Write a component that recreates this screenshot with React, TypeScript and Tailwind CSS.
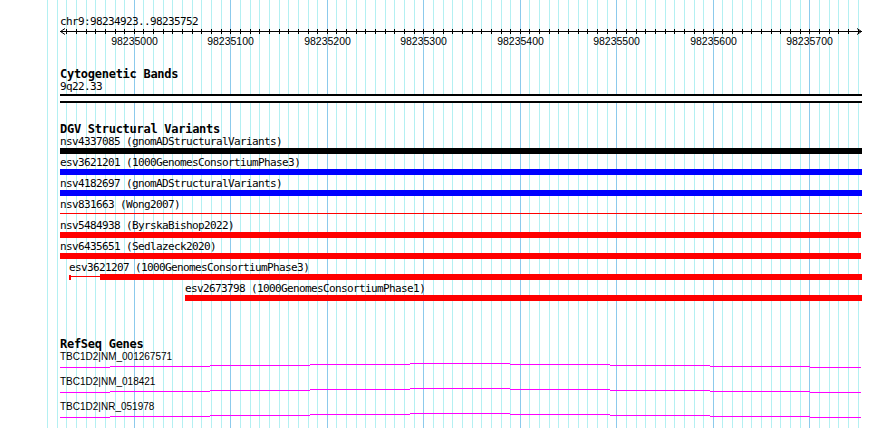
import React from "react";

const START = 98234923;
const END = 98235752;
const X0 = 60;
const SPAN = 800;

// genome coordinate -> pixel column on the page
const bpToX = (bp: number) => Math.floor(X0 + ((bp - START) * SPAN) / (END - START));

interface Variant {
  id: string;
  source: string;
  color: string;
  start: number;
  end: number;
  thin?: boolean;
  lead?: number; // x where a thin leading connector starts
}

const variants: Variant[] = [
  { id: "nsv4337085", source: "gnomADStructuralVariants", color: "#000000", start: 60, end: 862 },
  { id: "esv3621201", source: "1000GenomesConsortiumPhase3", color: "#0000ff", start: 60, end: 862 },
  { id: "nsv4182697", source: "gnomADStructuralVariants", color: "#0000ff", start: 60, end: 862 },
  { id: "nsv831663", source: "Wong2007", color: "#ff0000", start: 60, end: 862, thin: true },
  { id: "nsv5484938", source: "ByrskaBishop2022", color: "#ff0000", start: 60, end: 861 },
  { id: "nsv6435651", source: "Sedlazeck2020", color: "#ff0000", start: 60, end: 861 },
  { id: "esv3621207", source: "1000GenomesConsortiumPhase3", color: "#ff0000", start: 100, end: 862, lead: 69 },
  { id: "esv2673798", source: "1000GenomesConsortiumPhase1", color: "#ff0000", start: 185, end: 862 },
];

const genes = ["TBC1D2|NM_001267571", "TBC1D2|NM_018421", "TBC1D2|NR_051978"];

// stepped transcript line: [from, to, drop in px]
const geneSteps: [number, number, number][] = [
  [60, 110, 4],
  [110, 210, 3],
  [210, 310, 2],
  [310, 410, 1],
  [410, 510, 0],
  [510, 610, 1],
  [610, 710, 2],
  [710, 810, 3],
  [810, 861, 4],
];

const gridBps: number[] = [];
for (let bp = 98234910; bp <= 98235750; bp += 10) gridBps.push(bp);
const rulerBps = gridBps.filter((bp) => bp >= 98234930);
const majorBps = gridBps.filter((bp) => bp % 100 === 0);

function Grid() {
  return (
    <svg className="absolute inset-0" width={890} height={428} shapeRendering="crispEdges">
      {gridBps.map((bp) => (
        <rect
          key={bp}
          x={bpToX(bp)}
          y={0}
          width={1}
          height={428}
          fill={bp % 100 === 0 ? "#8ccaec" : "#b4f0f2"}
        />
      ))}
    </svg>
  );
}

function Ruler() {
  return (
    <div className="flex flex-col">
      <div className="h-[12px] text-[11px] leading-[12px] tracking-[-0.62px] font-['DejaVu_Sans_Mono',monospace]">
        chr9:98234923..98235752
      </div>
      <svg className="block" width={802} height={7} shapeRendering="crispEdges">
        <rect x={0} y={3} width={802} height={1} fill="#000" />
        {rulerBps.map((bp) => (
          <rect key={bp} x={bpToX(bp) - X0} y={1} width={1} height={5} fill="#000" />
        ))}
        <path d="M5 0.5 L0.5 3.5 L5 6.5" stroke="#000" fill="none" shapeRendering="auto" />
        <path d="M797 0.5 L801.5 3.5 L797 6.5" stroke="#000" fill="none" shapeRendering="auto" />
      </svg>
      <div className="relative h-[13px] text-[10.5px] leading-[13px] font-['Liberation_Sans',Arial,sans-serif]">
        {majorBps.map((bp) => (
          <span
            key={bp}
            className="absolute top-0 -translate-x-1/2 whitespace-nowrap"
            style={{ left: bpToX(bp) - X0 + 0.5 }}
          >
            {bp}
          </span>
        ))}
      </div>
    </div>
  );
}

function TrackTitle({ children }: { children: React.ReactNode }) {
  return (
    <div className="h-[13px] text-[12px] font-bold leading-[13px] tracking-[-0.27px] font-['DejaVu_Sans_Mono',monospace]">
      {children}
    </div>
  );
}

function VariantRow({ v }: { v: Variant }) {
  const labelX = v.lead ?? v.start;
  return (
    <div className="flex h-[21px] flex-col">
      <div
        className="h-[12px] whitespace-nowrap text-[11px] leading-[12px] tracking-[-0.62px] font-['DejaVu_Sans_Mono',monospace]"
        style={{ marginLeft: labelX - X0 }}
      >
        {v.id} ({v.source})
      </div>
      <div className="relative h-[6px]">
        {v.thin ? (
          <div className="absolute top-[2px] h-px" style={{ left: v.start - X0, width: v.end - v.start, background: v.color }} />
        ) : (
          <div className="absolute top-0 h-[6px]" style={{ left: v.start - X0, width: v.end - v.start, background: v.color }} />
        )}
        {v.lead !== undefined && (
          <>
            <div className="absolute top-[1px] h-[5px] w-[2px]" style={{ left: v.lead - X0, background: v.color }} />
            <div className="absolute top-[2px] h-px" style={{ left: v.lead - X0 + 2, width: v.start - v.lead - 2, background: v.color }} />
          </>
        )}
      </div>
    </div>
  );
}

function GeneRow({ name }: { name: string }) {
  return (
    <div className="flex h-[25px] flex-col">
      <div className="h-[12px] whitespace-nowrap text-[10px] leading-[12px] font-['Liberation_Sans',Arial,sans-serif]">
        {name}
      </div>
      <svg className="block" width={802} height={13} shapeRendering="crispEdges">
        {geneSteps.map(([a, b, d]) => (
          <rect key={a} x={a - X0} y={d} width={b - a} height={1} fill="#ff00ff" />
        ))}
      </svg>
    </div>
  );
}

export default function App() {
  return (
    <div className="relative h-[428px] w-[890px] overflow-hidden bg-white text-black">
      <Grid />
      <div className="relative ml-[60px] flex w-[802px] flex-col pt-[16px]">
        <Ruler />

        {/* Cytogenetic bands */}
        <div className="mt-[20px]">
          <TrackTitle>Cytogenetic Bands</TrackTitle>
        </div>
        <div className="h-[12px] text-[11px] leading-[12px] tracking-[-0.62px] font-['DejaVu_Sans_Mono',monospace]">
          9q22.33
        </div>
        <div className="mt-px h-[9px] border-y-2 border-black bg-white" />

        {/* DGV */}
        <div className="mt-[20px]">
          <TrackTitle>DGV Structural Variants</TrackTitle>
        </div>
        {variants.map((v) => (
          <VariantRow key={v.id} v={v} />
        ))}

        {/* RefSeq */}
        <div className="mt-[34px]">
          <TrackTitle>RefSeq Genes</TrackTitle>
        </div>
        {genes.map((g) => (
          <GeneRow key={g} name={g} />
        ))}
      </div>
    </div>
  );
}
